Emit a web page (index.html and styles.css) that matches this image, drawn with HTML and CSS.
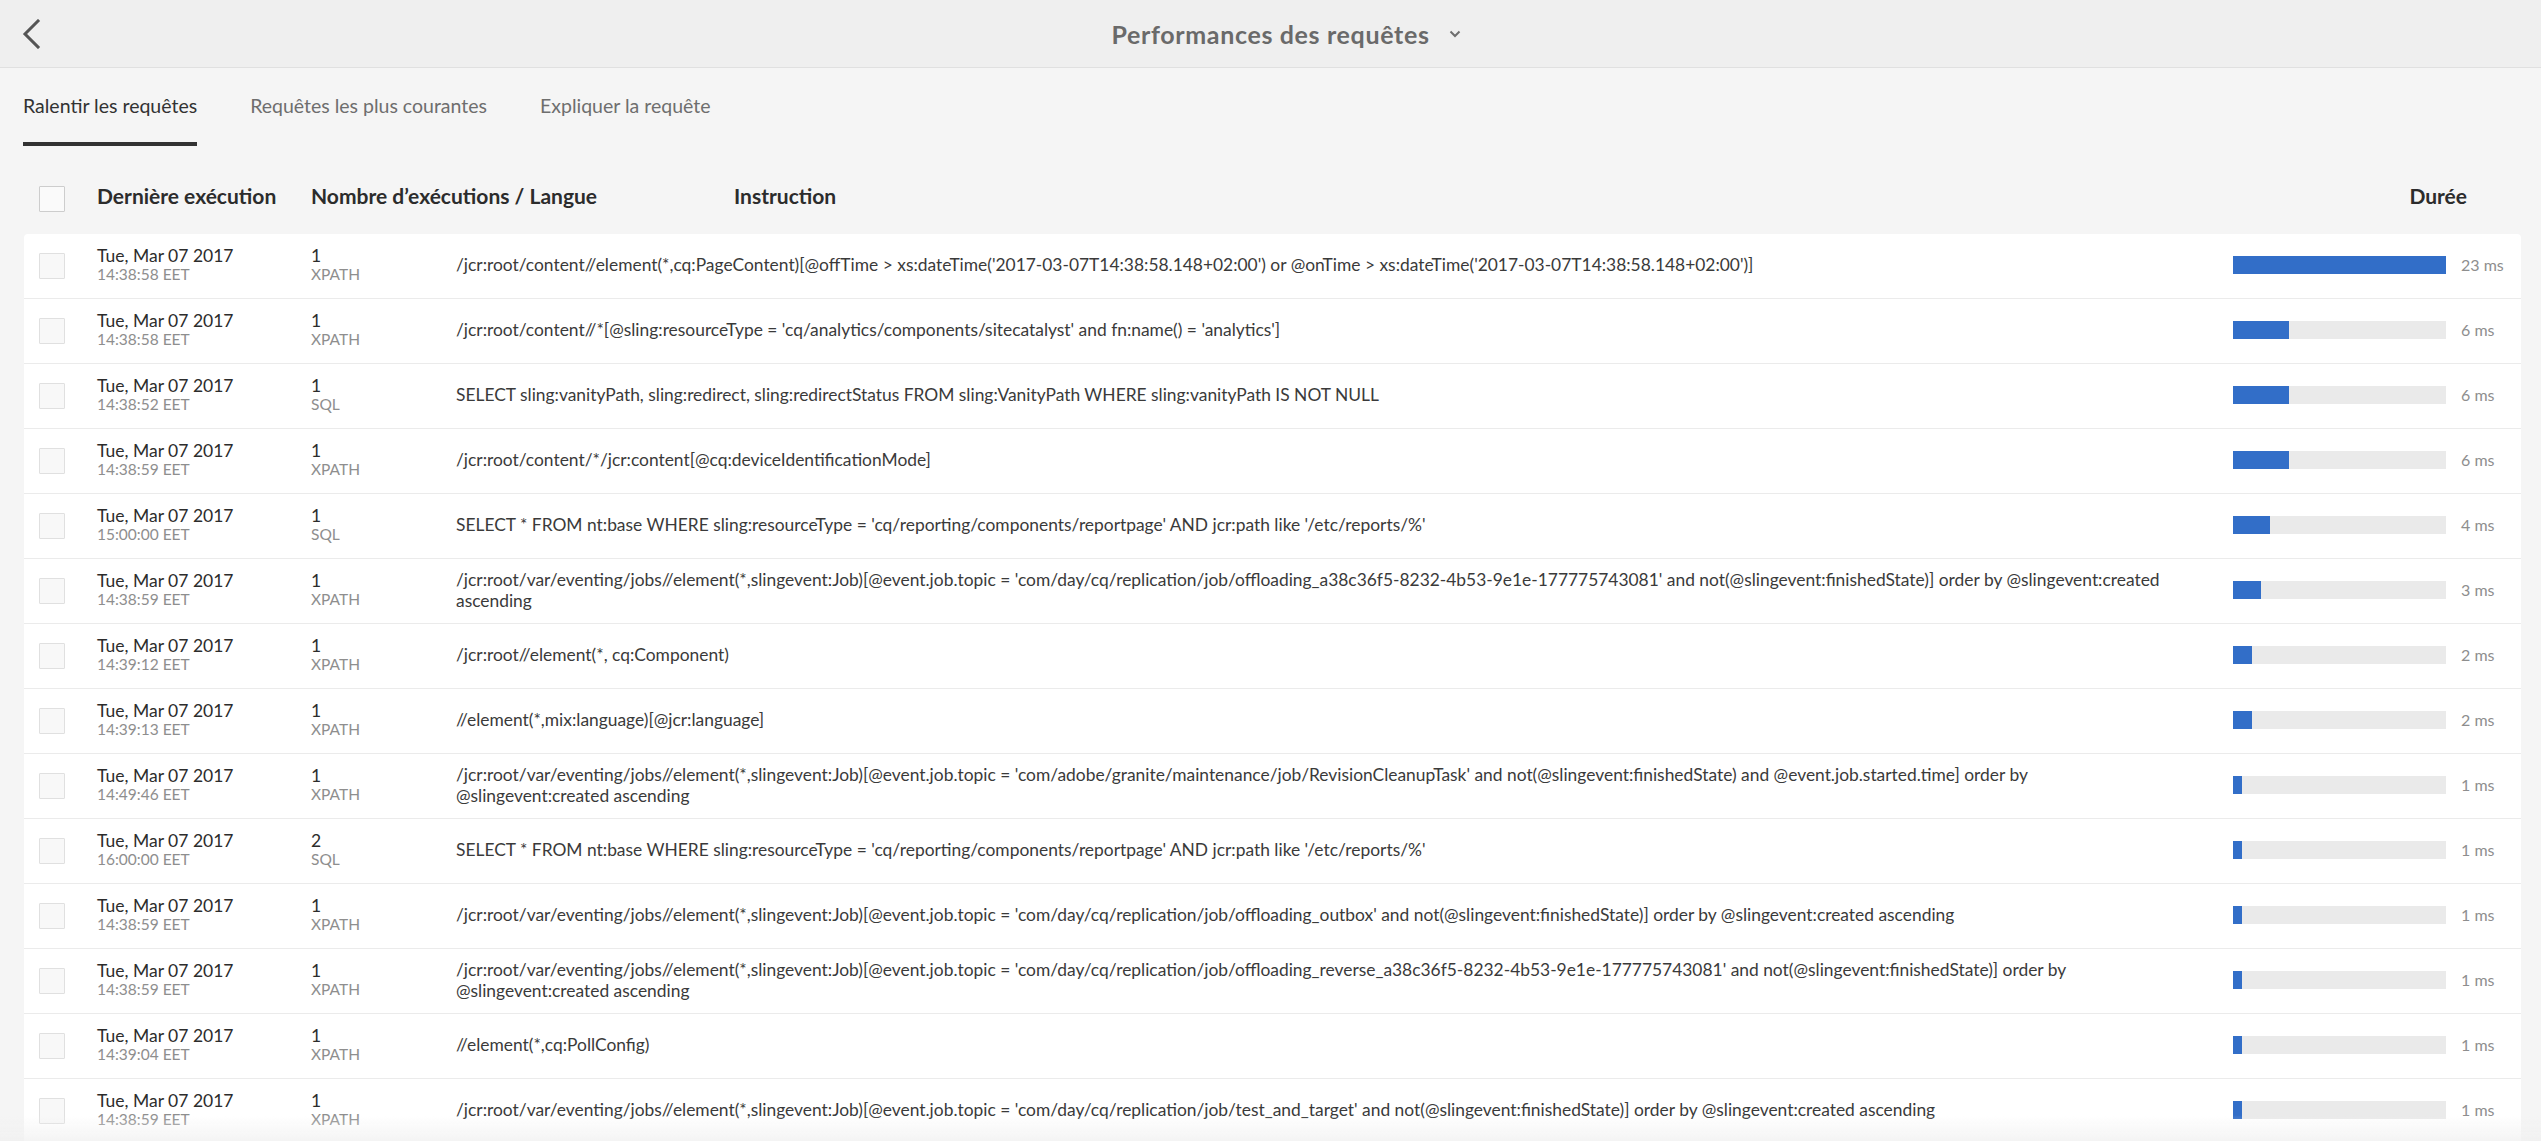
FILE: index.html
```html
<!DOCTYPE html>
<html lang="fr">
<head>
<meta charset="utf-8">
<title>Performances des requêtes</title>
<link rel="stylesheet" href="styles.css">
</head>
<body>
<header class="topbar">
  <a class="back" href="#" aria-label="Retour">
    <svg width="20" height="30" viewBox="0 0 20 30"><polyline points="16,2 3,15 16,28" fill="none" stroke="#555" stroke-width="3" stroke-linecap="square"/></svg>
  </a>
  <div class="title">Performances des requêtes</div>
  <div class="title-caret">
    <svg width="12" height="8" viewBox="0 0 12 8"><polyline points="1.5,1.5 6,6 10.5,1.5" fill="none" stroke="#6e6e6e" stroke-width="2"/></svg>
  </div>
</header>

<nav class="tabs">
  <div class="tab tab-active">Ralentir les requêtes</div>
  <div class="tab">Requêtes les plus courantes</div>
  <div class="tab">Expliquer la requête</div>
</nav>

<div class="thead">
  <span class="checkbox checkbox-head"></span>
  <span class="th th-date">Dernière exécution</span>
  <span class="th th-count">Nombre d’exécutions / Langue</span>
  <span class="th th-instr">Instruction</span>
  <span class="th th-dur">Durée</span>
</div>

<div class="tbody">
  <div class="row">
    <span class="checkbox"></span>
    <div class="cell"><div class="date">Tue, Mar 07 2017</div><div class="sub">14:38:58 EET</div></div>
    <div class="cell"><div class="date">1</div><div class="sub">XPATH</div></div>
    <div class="instr">/jcr:root/content//element(*,cq:PageContent)[@offTime &gt; xs:dateTime('2017-03-07T14:38:58.148+02:00') or @onTime &gt; xs:dateTime('2017-03-07T14:38:58.148+02:00')]</div>
    <div class="bar"><div class="bar-fill" style="width:100%"></div></div>
    <div class="ms">23 ms</div>
  </div>
  <div class="row">
    <span class="checkbox"></span>
    <div class="cell"><div class="date">Tue, Mar 07 2017</div><div class="sub">14:38:58 EET</div></div>
    <div class="cell"><div class="date">1</div><div class="sub">XPATH</div></div>
    <div class="instr">/jcr:root/content//*[@sling:resourceType = 'cq/analytics/components/sitecatalyst' and fn:name() = 'analytics']</div>
    <div class="bar"><div class="bar-fill" style="width:26.1%"></div></div>
    <div class="ms">6 ms</div>
  </div>
  <div class="row">
    <span class="checkbox"></span>
    <div class="cell"><div class="date">Tue, Mar 07 2017</div><div class="sub">14:38:52 EET</div></div>
    <div class="cell"><div class="date">1</div><div class="sub">SQL</div></div>
    <div class="instr">SELECT sling:vanityPath, sling:redirect, sling:redirectStatus FROM sling:VanityPath WHERE sling:vanityPath IS NOT NULL</div>
    <div class="bar"><div class="bar-fill" style="width:26.1%"></div></div>
    <div class="ms">6 ms</div>
  </div>
  <div class="row">
    <span class="checkbox"></span>
    <div class="cell"><div class="date">Tue, Mar 07 2017</div><div class="sub">14:38:59 EET</div></div>
    <div class="cell"><div class="date">1</div><div class="sub">XPATH</div></div>
    <div class="instr">/jcr:root/content/*/jcr:content[@cq:deviceIdentificationMode]</div>
    <div class="bar"><div class="bar-fill" style="width:26.1%"></div></div>
    <div class="ms">6 ms</div>
  </div>
  <div class="row">
    <span class="checkbox"></span>
    <div class="cell"><div class="date">Tue, Mar 07 2017</div><div class="sub">15:00:00 EET</div></div>
    <div class="cell"><div class="date">1</div><div class="sub">SQL</div></div>
    <div class="instr">SELECT * FROM nt:base WHERE sling:resourceType = 'cq/reporting/components/reportpage' AND jcr:path like '/etc/reports/%'</div>
    <div class="bar"><div class="bar-fill" style="width:17.4%"></div></div>
    <div class="ms">4 ms</div>
  </div>
  <div class="row">
    <span class="checkbox"></span>
    <div class="cell"><div class="date">Tue, Mar 07 2017</div><div class="sub">14:38:59 EET</div></div>
    <div class="cell"><div class="date">1</div><div class="sub">XPATH</div></div>
    <div class="instr">/jcr:root/var/eventing/jobs//element(*,slingevent:Job)[@event.job.topic = 'com/day/cq/replication/job/offloading_a38c36f5-8232-4b53-9e1e-177775743081' and not(@slingevent:finishedState)] order by @slingevent:created ascending</div>
    <div class="bar"><div class="bar-fill" style="width:13%"></div></div>
    <div class="ms">3 ms</div>
  </div>
  <div class="row">
    <span class="checkbox"></span>
    <div class="cell"><div class="date">Tue, Mar 07 2017</div><div class="sub">14:39:12 EET</div></div>
    <div class="cell"><div class="date">1</div><div class="sub">XPATH</div></div>
    <div class="instr">/jcr:root//element(*, cq:Component)</div>
    <div class="bar"><div class="bar-fill" style="width:8.7%"></div></div>
    <div class="ms">2 ms</div>
  </div>
  <div class="row">
    <span class="checkbox"></span>
    <div class="cell"><div class="date">Tue, Mar 07 2017</div><div class="sub">14:39:13 EET</div></div>
    <div class="cell"><div class="date">1</div><div class="sub">XPATH</div></div>
    <div class="instr">//element(*,mix:language)[@jcr:language]</div>
    <div class="bar"><div class="bar-fill" style="width:8.7%"></div></div>
    <div class="ms">2 ms</div>
  </div>
  <div class="row">
    <span class="checkbox"></span>
    <div class="cell"><div class="date">Tue, Mar 07 2017</div><div class="sub">14:49:46 EET</div></div>
    <div class="cell"><div class="date">1</div><div class="sub">XPATH</div></div>
    <div class="instr">/jcr:root/var/eventing/jobs//element(*,slingevent:Job)[@event.job.topic = 'com/adobe/granite/maintenance/job/RevisionCleanupTask' and not(@slingevent:finishedState) and @event.job.started.time] order by @slingevent:created ascending</div>
    <div class="bar"><div class="bar-fill" style="width:4.3%"></div></div>
    <div class="ms">1 ms</div>
  </div>
  <div class="row">
    <span class="checkbox"></span>
    <div class="cell"><div class="date">Tue, Mar 07 2017</div><div class="sub">16:00:00 EET</div></div>
    <div class="cell"><div class="date">2</div><div class="sub">SQL</div></div>
    <div class="instr">SELECT * FROM nt:base WHERE sling:resourceType = 'cq/reporting/components/reportpage' AND jcr:path like '/etc/reports/%'</div>
    <div class="bar"><div class="bar-fill" style="width:4.3%"></div></div>
    <div class="ms">1 ms</div>
  </div>
  <div class="row">
    <span class="checkbox"></span>
    <div class="cell"><div class="date">Tue, Mar 07 2017</div><div class="sub">14:38:59 EET</div></div>
    <div class="cell"><div class="date">1</div><div class="sub">XPATH</div></div>
    <div class="instr">/jcr:root/var/eventing/jobs//element(*,slingevent:Job)[@event.job.topic = 'com/day/cq/replication/job/offloading_outbox' and not(@slingevent:finishedState)] order by @slingevent:created ascending</div>
    <div class="bar"><div class="bar-fill" style="width:4.3%"></div></div>
    <div class="ms">1 ms</div>
  </div>
  <div class="row">
    <span class="checkbox"></span>
    <div class="cell"><div class="date">Tue, Mar 07 2017</div><div class="sub">14:38:59 EET</div></div>
    <div class="cell"><div class="date">1</div><div class="sub">XPATH</div></div>
    <div class="instr">/jcr:root/var/eventing/jobs//element(*,slingevent:Job)[@event.job.topic = 'com/day/cq/replication/job/offloading_reverse_a38c36f5-8232-4b53-9e1e-177775743081' and not(@slingevent:finishedState)] order by @slingevent:created ascending</div>
    <div class="bar"><div class="bar-fill" style="width:4.3%"></div></div>
    <div class="ms">1 ms</div>
  </div>
  <div class="row">
    <span class="checkbox"></span>
    <div class="cell"><div class="date">Tue, Mar 07 2017</div><div class="sub">14:39:04 EET</div></div>
    <div class="cell"><div class="date">1</div><div class="sub">XPATH</div></div>
    <div class="instr">//element(*,cq:PollConfig)</div>
    <div class="bar"><div class="bar-fill" style="width:4.3%"></div></div>
    <div class="ms">1 ms</div>
  </div>
  <div class="row">
    <span class="checkbox"></span>
    <div class="cell"><div class="date">Tue, Mar 07 2017</div><div class="sub">14:38:59 EET</div></div>
    <div class="cell"><div class="date">1</div><div class="sub">XPATH</div></div>
    <div class="instr">/jcr:root/var/eventing/jobs//element(*,slingevent:Job)[@event.job.topic = 'com/day/cq/replication/job/test_and_target' and not(@slingevent:finishedState)] order by @slingevent:created ascending</div>
    <div class="bar"><div class="bar-fill" style="width:4.3%"></div></div>
    <div class="ms">1 ms</div>
  </div>
</div>
<div class="fade"></div>
</body>
</html>
```

FILE: styles.css
```css
html, body {
  margin: 0;
  height: 100%;
  overflow: hidden;
}
body {
  background: #f5f5f5;
  font-family: Lato, "Open Sans", "Noto Sans", sans-serif;
  color: #2c2c2c;
}

/* Top bar */
.topbar {
  display: grid;
  grid-template-columns: 1fr auto 1fr;
  align-items: center;
  height: 67px;
  background: #efefef;
  border-bottom: 1px solid #e0e0e0;
}
.back {
  justify-self: start;
  margin-left: 22px;
  display: flex;
}
.title {
  font-size: 25px;
  font-weight: 700;
  line-height: 30px;
  color: #6a6a6a;
  letter-spacing: 0.65px;
}
.title-caret {
  justify-self: start;
  margin-left: 19px;
  display: flex;
}

/* Tabs */
.tabs {
  display: flex;
  gap: 53px;
  padding-left: 23px;
}
.tab {
  padding-top: 26px;
  padding-bottom: 24px;
  line-height: 24px;
  font-size: 19.5px;
  color: #6e6e6e;
  border-bottom: 4px solid transparent;
}
.tab-active {
  color: #323232;
  border-bottom-color: #323232;
}

/* Checkbox */
.checkbox {
  display: block;
  width: 24px;
  height: 24px;
  border: 1px solid #e0e0e0;
  background: #f8f8f8;
  border-radius: 1px;
}
.checkbox-head {
  border-color: #cdcdcd;
  background: #fafafa;
}

/* Table head */
.thead {
  display: flex;
  align-items: flex-start;
  margin: 0 20px 0 24px;
  padding: 40px 0 22px 15px;
}
.thead .checkbox {
  margin-right: 32px;
  flex: none;
}
.th {
  font-size: 21px;
  font-weight: 700;
  line-height: 20px;
  color: #2c2c2c;
}
.th-date { width: 214px; flex: none; }
.th-count { width: 423px; flex: none; }
.th-instr { flex: 1; }
.th-dur { margin-right: 54px; }

/* Table body */
.tbody {
  margin: 0 20px 0 24px;
  background: #ffffff;
  border-radius: 4px 4px 0 0;
}
.row {
  display: grid;
  grid-template-columns: 58px 214px 145px minmax(0, 1fr) 213px 75px;
  align-items: center;
  height: 61px;
  padding: 0 0 3px 15px;
  border-bottom: 1px solid #ebebeb;
}
.row .checkbox {
  margin-top: 3px;
}
.date {
  font-size: 17.5px;
  line-height: 18px;
  color: #2c2c2c;
}
.sub {
  font-size: 15.5px;
  line-height: 18px;
  color: #8e8e8e;
}
.instr {
  font-size: 17.4px;
  line-height: 21px;
  color: #3a3a3a;
  padding-right: 48px;
}
.bar {
  height: 18px;
  background: #eaeaea;
}
.bar-fill {
  height: 100%;
  background: #326ec8;
}
.ms {
  padding-left: 15px;
  font-size: 16px;
  color: #8e8e8e;
}

.fade {
  position: fixed;
  left: 0;
  right: 0;
  bottom: 0;
  height: 26px;
  background: linear-gradient(rgba(240, 240, 240, 0), rgba(240, 240, 240, 0.7));
  pointer-events: none;
}
```
